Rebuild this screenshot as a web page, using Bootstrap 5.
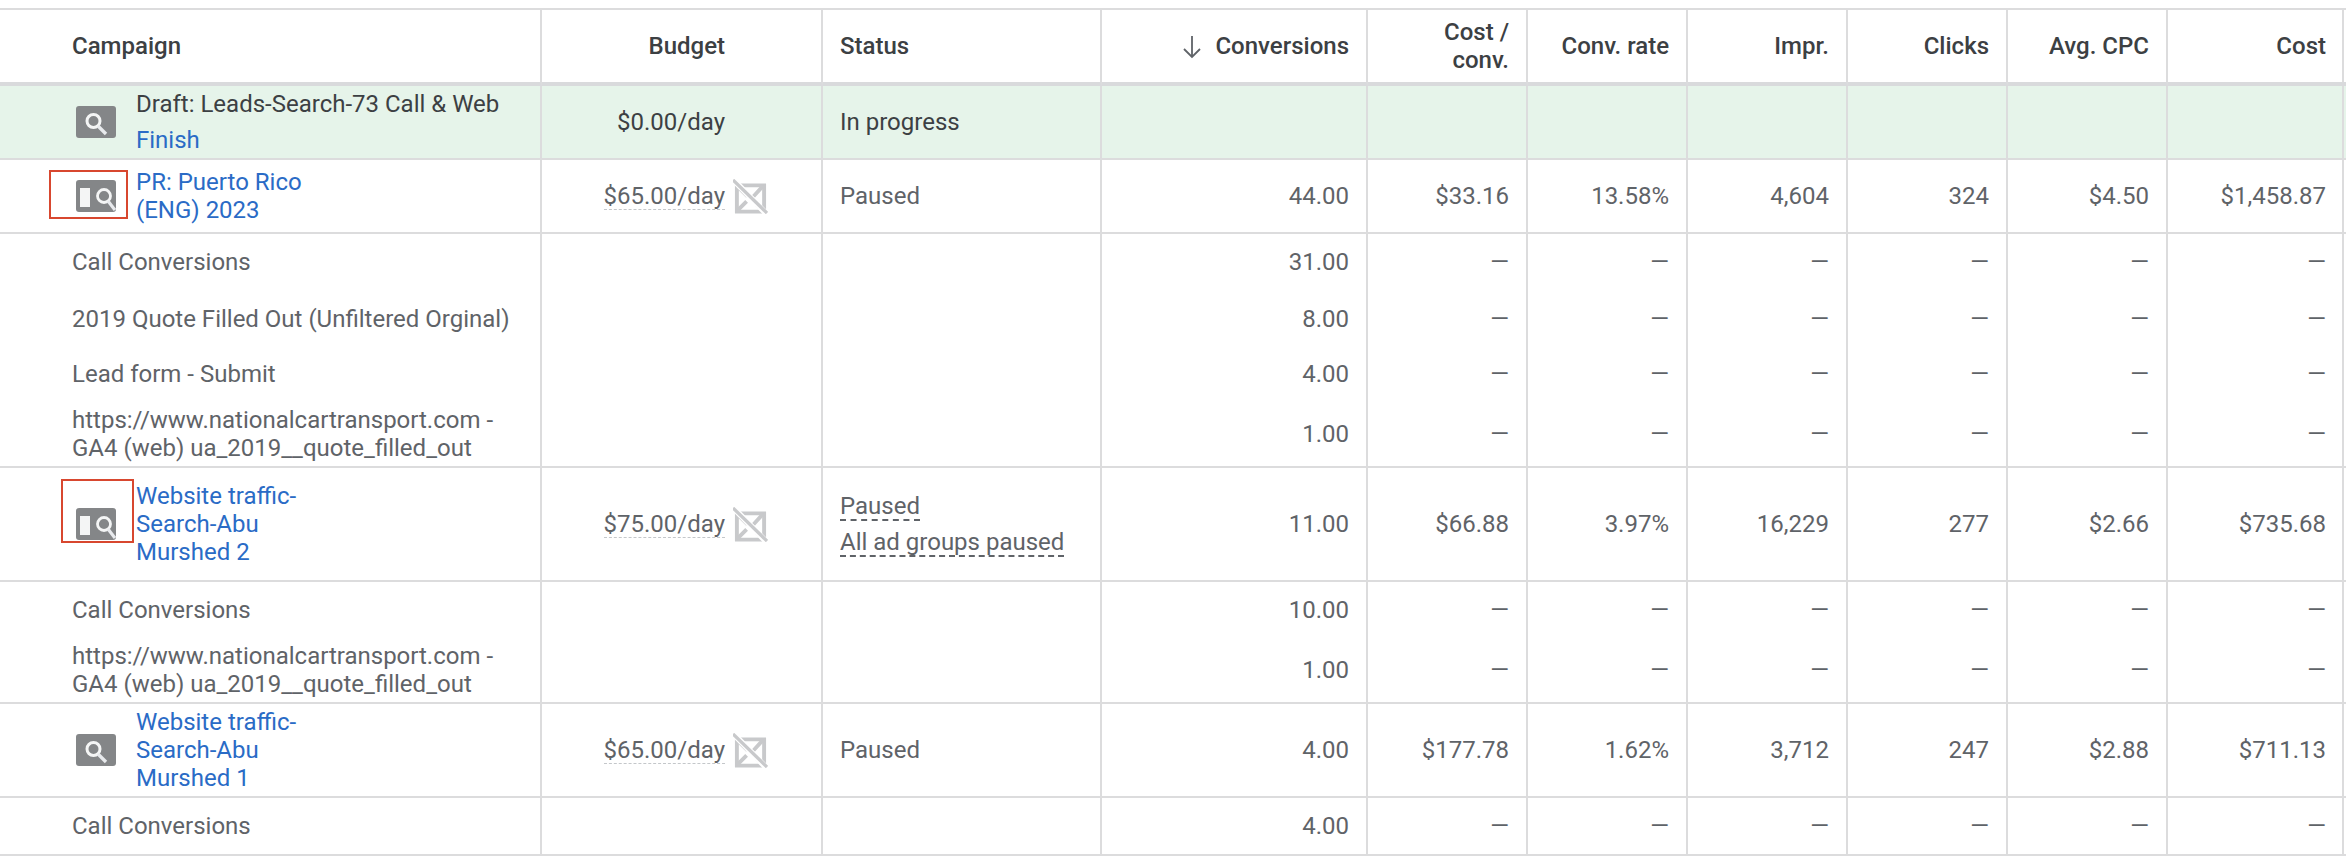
<!DOCTYPE html>
<html lang="en"><head><meta charset="utf-8"><title>Campaigns</title>
<link href="https://cdn.jsdelivr.net/npm/bootstrap@5.3.0/dist/css/bootstrap.min.css" rel="stylesheet">
<style>
body{background:#fff;font-family:Roboto,"Liberation Sans",sans-serif;font-size:24px;color:#5f6368;padding-top:8px;overflow:hidden}
.camp-table{table-layout:fixed;width:2346px;border-collapse:separate;border-spacing:0;margin:0;--bs-table-bg:transparent;--bs-table-color:#5f6368;--bs-table-border-color:#dcdcdd}
.camp-table th,.camp-table td{padding:0 17px 0 0;vertical-align:middle;text-align:right;line-height:28px;border:0;border-right:2px solid #dcdcdd;font-size:24px;color:#5f6368;box-shadow:none}
.camp-table th:last-child,.camp-table td:last-child{padding-right:20px;border-right:0;background-image:linear-gradient(#dcdcdd,#dcdcdd);background-repeat:no-repeat;background-size:2px 100%;background-position:right 2px top 0}
.camp-table th{font-weight:500;color:#3c4043;border-top:2px solid #dcdcdd;border-bottom:4px solid #d9dadc;height:78px;background-color:#fff}
.camp-table .name-c{text-align:left;padding-left:72px}
.camp-table .status-c{text-align:left;padding-left:17px}
.camp-table .budget-c{padding-right:53px}
.end-row td{border-bottom:2px solid #dcdcdd}
.camp-table .draft-row td{background-color:#e6f4ea;height:74px;color:#3c4043}
.draft-row td,.h74 td{border-bottom:2px solid #dcdcdd}
.h74 td{height:74px}
.h114 td{height:114px}.h94 td{height:94px}
.h58 td{height:58px}.h57 td{height:57px}.h56 td{height:56px}.h54 td{height:54px}.h67 td{height:67px}.h66 td{height:66px}
.name-wrap{margin-left:4px;gap:20px}
.camp-ico{position:relative;flex:none;width:40px;height:32px;display:block}
.red-box{position:absolute;border:2px solid #d8472f}
.rb-a{left:-27px;top:-10px;width:79px;height:49px}
.rb-b{left:-15px;top:-29px;width:73px;height:64px}
.camp-link{color:#2a6bc6;text-decoration:none}
.draft-text{line-height:36px;color:#3c4043}
.budget-line{display:flex;justify-content:flex-end;align-items:center;gap:8px}
.icon-slot{width:35px;height:35px;flex:none}
.dash-light{border-bottom:1px dashed #c4c7ca;line-height:26px}
.dash-dark{border-bottom:2px dashed #5f6368;display:inline-block;line-height:26px}
.status-stack{line-height:36px}
.sort-ico{vertical-align:-5px;margin-right:11px}
</style></head><body>
<svg width="0" height="0" class="d-block" aria-hidden="true"><defs>
<symbol id="ico-search" viewBox="0 0 40 32"><rect width="40" height="32" rx="3" fill="#848688"/><circle cx="17.500" cy="15" r="6.500" fill="none" stroke="#f4f5f5" stroke-width="3"/><path d="M22 20l8 8" stroke="#e8eaed" stroke-width="3.400"/></symbol>
<symbol id="ico-display" viewBox="0 0 40 32"><rect width="40" height="32" rx="3" fill="#848688"/><rect x="4" y="8" width="10" height="19" fill="#f4f5f5"/><circle cx="28" cy="16" r="6.500" fill="none" stroke="#f4f5f5" stroke-width="2.800"/><path d="M32 21l7 9" stroke="#e8eaed" stroke-width="3.200"/></symbol>
<symbol id="ico-noad" viewBox="0 0 36 36"><path d="M4 6.500h28v27H4z" fill="none" stroke="#c8c9cb" stroke-width="4"/><path d="M4 7l11 11M31 7L21 18M4 33l10-10M31 33l-7-7" stroke="#c8c9cb" stroke-width="4" fill="none"/><path d="M3 3.500l31 32" stroke="#fff" stroke-width="6"/><path d="M0 1l35 34" stroke="#c8c9cb" stroke-width="3.400"/></symbol>
</defs></svg>
<table class="table camp-table">
<colgroup><col style="width:542px"><col style="width:281px"><col style="width:279px"><col style="width:266px"><col style="width:160px"><col style="width:160px"><col style="width:160px"><col style="width:160px"><col style="width:160px"><col style="width:178px"></colgroup>
<thead><tr>
<th class="name-c">Campaign</th>
<th class="budget-c"><div class="budget-line"><span>Budget</span><span class="icon-slot"></span></div></th>
<th class="status-c">Status</th>
<th><svg class="sort-ico" width="24" height="24" viewBox="0 0 24 24"><path d="M12 1v21M4 14l8 8 8-8" fill="none" stroke="#5f6368" stroke-width="1.800"/></svg>Conversions</th>
<th>Cost /<br>conv.</th><th>Conv. rate</th><th>Impr.</th><th>Clicks</th><th>Avg. CPC</th><th>Cost</th>
</tr></thead>
<tbody>
<tr class="draft-row">
<td class="name-c"><div class="d-flex align-items-center name-wrap"><svg class="camp-ico"><use href="#ico-search"/></svg><div class="draft-text">Draft: Leads-Search-73 Call &amp; Web<br><a class="camp-link" href="#">Finish</a></div></div></td>
<td class="budget-c"><div class="budget-line"><span>$0.00/day</span><span class="icon-slot"></span></div></td>
<td class="status-c">In progress</td><td></td><td></td><td></td><td></td><td></td><td></td><td></td></tr>
<tr class="h74">
<td class="name-c"><div class="d-flex align-items-center name-wrap"><span class="camp-ico"><svg width="40" height="32" class="d-block"><use href="#ico-display"/></svg><span class="red-box rb-a"></span></span><a class="camp-link" href="#">PR: Puerto Rico<br>(ENG) 2023</a></div></td>
<td class="budget-c"><div class="budget-line"><span class="dash-light">$65.00/day</span><svg class="icon-slot"><use href="#ico-noad"/></svg></div></td>
<td class="status-c">Paused</td><td>44.00</td><td>$33.16</td><td>13.58%</td><td>4,604</td><td>324</td><td>$4.50</td><td>$1,458.87</td></tr>
<tr class="h56"><td class="name-c">Call Conversions</td><td></td><td></td><td>31.00</td><td>—</td><td>—</td><td>—</td><td>—</td><td>—</td><td>—</td></tr>
<tr class="h57"><td class="name-c">2019 Quote Filled Out (Unfiltered Orginal)</td><td></td><td></td><td>8.00</td><td>—</td><td>—</td><td>—</td><td>—</td><td>—</td><td>—</td></tr>
<tr class="h54"><td class="name-c">Lead form - Submit</td><td></td><td></td><td>4.00</td><td>—</td><td>—</td><td>—</td><td>—</td><td>—</td><td>—</td></tr>
<tr class="h67 end-row"><td class="name-c">https://www.nationalcartransport.com -<br>GA4 (web) ua_2019__quote_filled_out</td><td></td><td></td><td>1.00</td><td>—</td><td>—</td><td>—</td><td>—</td><td>—</td><td>—</td></tr>
<tr class="h114 end-row">
<td class="name-c"><div class="d-flex align-items-center name-wrap"><span class="camp-ico"><svg width="40" height="32" class="d-block"><use href="#ico-display"/></svg><span class="red-box rb-b"></span></span><a class="camp-link" href="#">Website traffic-<br>Search-Abu<br>Murshed 2</a></div></td>
<td class="budget-c"><div class="budget-line"><span class="dash-light">$75.00/day</span><svg class="icon-slot"><use href="#ico-noad"/></svg></div></td>
<td class="status-c"><div class="status-stack"><span class="dash-dark">Paused</span><br><span class="dash-dark">All ad groups paused</span></div></td><td>11.00</td><td>$66.88</td><td>3.97%</td><td>16,229</td><td>277</td><td>$2.66</td><td>$735.68</td></tr>
<tr class="h56"><td class="name-c">Call Conversions</td><td></td><td></td><td>10.00</td><td>—</td><td>—</td><td>—</td><td>—</td><td>—</td><td>—</td></tr>
<tr class="h66 end-row"><td class="name-c">https://www.nationalcartransport.com -<br>GA4 (web) ua_2019__quote_filled_out</td><td></td><td></td><td>1.00</td><td>—</td><td>—</td><td>—</td><td>—</td><td>—</td><td>—</td></tr>
<tr class="h94 end-row">
<td class="name-c"><div class="d-flex align-items-center name-wrap"><svg class="camp-ico"><use href="#ico-search"/></svg><a class="camp-link" href="#">Website traffic-<br>Search-Abu<br>Murshed 1</a></div></td>
<td class="budget-c"><div class="budget-line"><span class="dash-light">$65.00/day</span><svg class="icon-slot"><use href="#ico-noad"/></svg></div></td>
<td class="status-c">Paused</td><td>4.00</td><td>$177.78</td><td>1.62%</td><td>3,712</td><td>247</td><td>$2.88</td><td>$711.13</td></tr>
<tr class="h58 end-row"><td class="name-c">Call Conversions</td><td></td><td></td><td>4.00</td><td>—</td><td>—</td><td>—</td><td>—</td><td>—</td><td>—</td></tr>
</tbody></table>
<script src="https://cdn.jsdelivr.net/npm/bootstrap@5.3.0/dist/js/bootstrap.bundle.min.js"></script>
</body></html>
